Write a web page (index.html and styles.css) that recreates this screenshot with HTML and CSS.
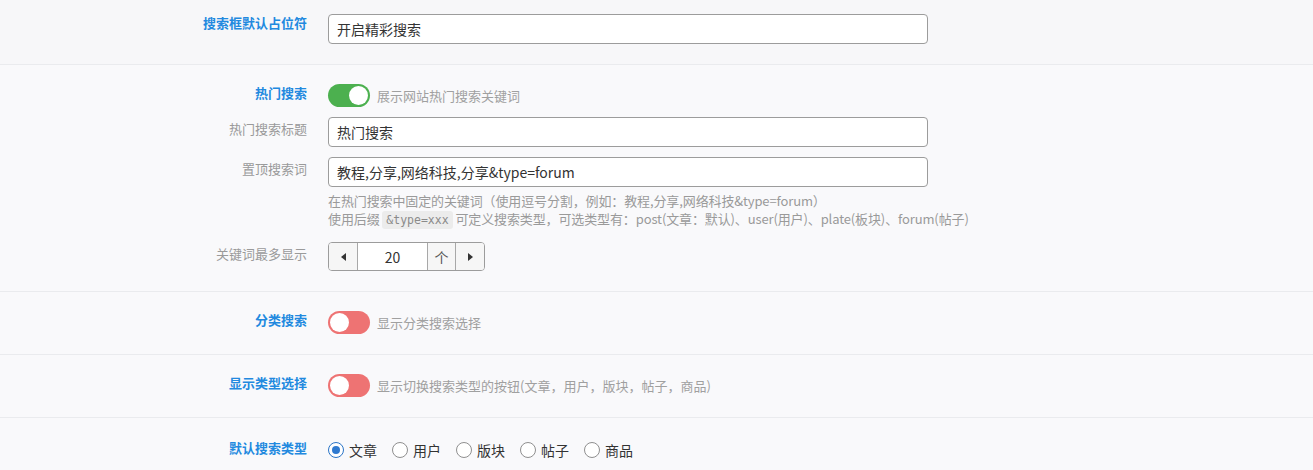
FILE: index.html
```html
<!DOCTYPE html>
<html lang="zh-CN">
<head>
<meta charset="utf-8">
<title>搜索设置</title>
<link rel="stylesheet" href="styles.css">
</head>
<body>
<div class="form">
  <section class="sec sec-first">
    <div class="row">
      <div class="lbl lbl-main">搜索框默认占位符</div>
      <div class="ctl"><input class="text" type="text" value="开启精彩搜索"></div>
    </div>
  </section>

  <section class="sec">
    <div class="row">
      <div class="lbl lbl-main">热门搜索</div>
      <div class="ctl switch-line">
        <span class="switch on"><span class="knob"></span></span>
        <span class="switch-desc">展示网站热门搜索关键词</span>
      </div>
    </div>
    <div class="row">
      <div class="lbl lbl-sub">热门搜索标题</div>
      <div class="ctl"><input class="text" type="text" value="热门搜索"></div>
    </div>
    <div class="row">
      <div class="lbl lbl-sub">置顶搜索词</div>
      <div class="ctl">
        <input class="text" type="text" value="教程,分享,网络科技,分享&amp;type=forum">
        <div class="help">
          <div>在热门搜索中固定的关键词（使用逗号分割，例如：教程,分享,网络科技&amp;type=forum）</div>
          <div>使用后缀 <code class="code">&amp;type=xxx</code> 可定义搜索类型，可选类型有：post(文章：默认)、user(用户)、plate(板块)、forum(帖子)</div>
        </div>
      </div>
    </div>
    <div class="row">
      <div class="lbl lbl-sub">关键词最多显示</div>
      <div class="ctl">
        <div class="spinner">
          <span class="spin-btn"><span class="tri tri-left"></span></span>
          <input class="spin-val" type="text" value="20">
          <span class="spin-unit">个</span>
          <span class="spin-btn"><span class="tri tri-right"></span></span>
        </div>
      </div>
    </div>
  </section>

  <section class="sec">
    <div class="row">
      <div class="lbl lbl-main">分类搜索</div>
      <div class="ctl switch-line">
        <span class="switch off"><span class="knob"></span></span>
        <span class="switch-desc">显示分类搜索选择</span>
      </div>
    </div>
  </section>

  <section class="sec">
    <div class="row">
      <div class="lbl lbl-main">显示类型选择</div>
      <div class="ctl switch-line">
        <span class="switch off"><span class="knob"></span></span>
        <span class="switch-desc">显示切换搜索类型的按钮(文章，用户，版块，帖子，商品)</span>
      </div>
    </div>
  </section>

  <section class="sec">
    <div class="row">
      <div class="lbl lbl-main lbl-radio">默认搜索类型</div>
      <div class="ctl radios">
        <label class="radio"><span class="dot checked"></span>文章</label>
        <label class="radio"><span class="dot"></span>用户</label>
        <label class="radio"><span class="dot"></span>版块</label>
        <label class="radio"><span class="dot"></span>帖子</label>
        <label class="radio"><span class="dot"></span>商品</label>
      </div>
    </div>
  </section>
</div>
</body>
</html>
```

FILE: styles.css
```css
html, body {
  margin: 0;
  padding: 0;
  background: #f9f9fb;
}

body {
  font-family: "Noto Sans CJK SC", "Noto Sans", sans-serif;
  font-size: 13px;
  color: #333;
}

.form {
  display: flex;
  flex-direction: column;
}

.sec {
  display: flex;
  flex-direction: column;
  gap: 10px;
  padding: 19px 0 20px;
  border-bottom: 1px solid #eaebee;
  background: #f9f9fb;
}

.sec-first {
  padding-top: 14px;
  background: #f7f7f9;
}

.row {
  display: flex;
  align-items: flex-start;
  gap: 21px;
}

.lbl {
  width: 307px;
  flex: none;
  text-align: right;
  line-height: 18px;
  font-size: 13px;
}

.lbl-main {
  color: #2289df;
  font-weight: 700;
}

.lbl-sub {
  color: #9a9a9a;
  padding-top: 3px;
}

.lbl-radio {
  padding-top: 2px;
}

.ctl {
  display: flex;
  flex-direction: column;
}

.text {
  box-sizing: border-box;
  width: 600px;
  height: 30px;
  margin: 0;
  padding: 0 8px;
  border: 1px solid #9c9c9c;
  border-radius: 4px;
  background: #fff;
  font-family: "Noto Sans CJK SC", "Noto Sans", sans-serif;
  font-size: 14px;
  color: #333;
  outline: none;
}

.help {
  margin: 5px 0 3px;
  line-height: 18px;
  font-size: 13px;
  letter-spacing: -0.12px;
  color: #9a9a9a;
  white-space: nowrap;
}

.code {
  display: inline-block;
  padding: 0 4px;
  line-height: 18px;
  border-radius: 3px;
  background: #ececec;
  font-family: "DejaVu Sans Mono", "Liberation Mono", monospace;
  font-size: 11.5px;
  letter-spacing: 0;
  color: #8a8a8a;
}

/* toggle switch */
.switch-line {
  flex-direction: row;
  align-items: center;
  height: 23px;
  gap: 7px;
}

.switch {
  position: relative;
  box-sizing: border-box;
  width: 42px;
  height: 23px;
  border-radius: 12px;
  flex: none;
}

.switch.on {
  background: #4cb04f;
}

.switch.off {
  background: #ee7373;
}

.knob {
  position: absolute;
  top: 2px;
  width: 19px;
  height: 19px;
  border-radius: 50%;
  background: #fff;
}

.switch.on .knob {
  right: 2px;
}

.switch.off .knob {
  left: 2px;
}

.switch-desc {
  color: #a0a0a0;
  font-size: 13px;
  line-height: 18px;
}

/* number spinner */
.spinner {
  display: flex;
  box-sizing: border-box;
  width: 157px;
  height: 29px;
  border: 1px solid #9c9c9c;
  border-radius: 4px;
  overflow: hidden;
  background: #fff;
}

.spin-btn {
  display: flex;
  align-items: center;
  justify-content: center;
  width: 28px;
  flex: none;
  background: #f6f6f6;
}

.spin-val {
  box-sizing: border-box;
  width: 70px;
  flex: none;
  height: 100%;
  margin: 0;
  padding: 0;
  border: none;
  border-left: 1px solid #a8a8a8;
  text-align: center;
  font-family: "Noto Sans CJK SC", "Noto Sans", sans-serif;
  font-size: 14px;
  color: #333;
  background: #fff;
  outline: none;
}

.spin-unit {
  box-sizing: border-box;
  display: flex;
  align-items: center;
  justify-content: center;
  width: 29px;
  flex: none;
  border-left: 1px solid #a8a8a8;
  border-right: 1px solid #a8a8a8;
  background: #f6f6f6;
  font-size: 14px;
  color: #555;
}

.tri {
  width: 0;
  height: 0;
  border-top: 4px solid transparent;
  border-bottom: 4px solid transparent;
}

.tri-left {
  border-right: 5px solid #333;
}

.tri-right {
  border-left: 5px solid #333;
}

/* radio group */
.radios {
  flex-direction: row;
  align-items: center;
  height: 26px;
  gap: 15px;
}

.radio {
  display: flex;
  align-items: center;
  gap: 5px;
  font-size: 14px;
  line-height: 18px;
  color: #333;
}

.dot {
  position: relative;
  box-sizing: border-box;
  width: 16px;
  height: 16px;
  border: 1px solid #8f8f8f;
  border-radius: 50%;
  background: #fff;
  flex: none;
}

.dot.checked {
  border-color: #2a74c6;
}

.dot.checked::after {
  content: "";
  position: absolute;
  top: 3px;
  left: 3px;
  width: 8px;
  height: 8px;
  border-radius: 50%;
  background: #2f7ad0;
}
```
